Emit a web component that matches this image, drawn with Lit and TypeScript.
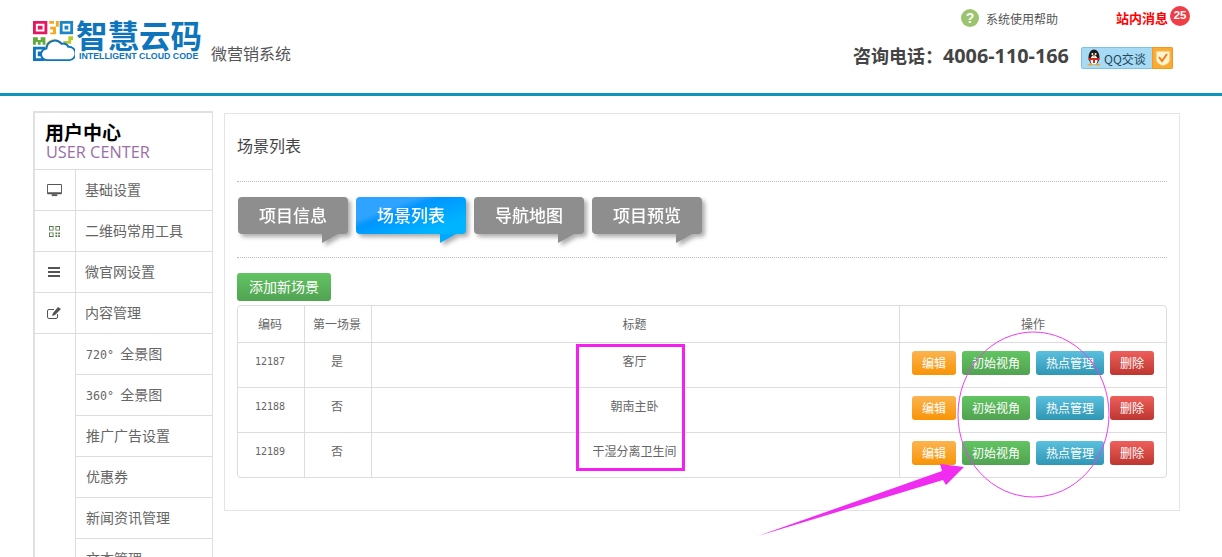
import { LitElement, html, css, svg, unsafeCSS } from "lit";
import { customElement } from "lit/decorators.js";

const CJK = unsafeCSS(`"Noto Sans CJK SC", "Liberation Sans", sans-serif`);

const logoMark = svg`<svg class="mark" width="42" height="42" viewBox="0 0 44 44">
  <path fill="#e6175f" fill-rule="evenodd" d="M0 1h15v14H0zM3 4v8h9V4z"/><rect x="5" y="6" width="5" height="4" fill="#e6175f"/>
  <path fill="#f5a81c" d="M17 1h5v3h-5zM24 1h3v6h-3zM18 7h6v3h-6zM21 10h3v5h-6v-2h3z"/>
  <path fill="#1d86c9" fill-rule="evenodd" d="M28 1h14v14H28zM31 4v8h8V4z"/><rect x="33" y="6" width="4" height="4" fill="#1d86c9"/>
  <path fill="#5cab3c" d="M0 18h5v3h3v-3h5v8h-3v-3H8v3H5v-3H3v3H0z"/>
  <path fill="#b7c92f" d="M37 17h5v4h-2v4h-8v-3h5z"/>
  <path fill="#0e75bd" fill-rule="evenodd" d="M0 28h13v3H3v9h9v3H0z"/><rect x="5" y="33" width="4" height="5" fill="#0e75bd"/>
  <path d="M14 30a8 8 0 0 1 14-6" fill="none" stroke="#f5a81c" stroke-width="2"/>
  <path d="M20 42h-5a6 6 0 0 1 -1-12 9 9 0 0 1 16-5 6 6 0 0 1 7 3 7 7 0 0 1 1 14z" fill="none" stroke="#0e75bd" stroke-width="2"/>
</svg>`;

const penguin = svg`<svg width="16" height="18" viewBox="0 0 16 18">
  <ellipse cx="8" cy="8" rx="5.500" ry="7.500" fill="#1c1c1c"/><ellipse cx="8" cy="11" rx="3.600" ry="4.600" fill="#fff"/>
  <circle cx="6.400" cy="5" r="1" fill="#fff"/><circle cx="9.600" cy="5" r="1" fill="#fff"/>
  <path d="M6 6.600h4l-2 1.400z" fill="#f2a51f"/><path d="M2.500 9h11v2H9v3H7v-3H2.500z" fill="#d9261c"/>
  <path d="M1 16l4-2 2 2.500H2zM15 16l-4-2-2 2.500h5z" fill="#f2a51f"/>
</svg>`;

const shield = svg`<svg width="16" height="18" viewBox="0 0 16 18">
  <path d="M1 2h14v9c0 3-4 5-7 6-3-1-7-3-7-6z" fill="#fff3d0" stroke="#f7b24a"/>
  <path d="M4 8l3 4 5-7" fill="none" stroke="#ef7f1a" stroke-width="2"/>
</svg>`;

const icons: Record<string, unknown> = {
  monitor: svg`<svg width="15" height="13" viewBox="0 0 16 14"><path fill="#555" fill-rule="evenodd" d="M1 0h14a1 1 0 0 1 1 1v9a1 1 0 0 1-1 1H1a1 1 0 0 1-1-1V1a1 1 0 0 1 1-1zM1 1v8h14V1z"/><path fill="#555" d="M5 11h6v2H5z"/></svg>`,
  qr: svg`<svg width="11" height="11" viewBox="0 0 12 12"><path fill="#5b7a4a" fill-rule="evenodd" d="M0 0h5v5H0zM1 1v3h3V1zM7 0h5v5H7zM8 1v3h3V1zM0 7h5v5H0zM1 8v3h3V8zM7 7h2v2H7zM10 7h2v2h-2zM7 10h2v2H7zM10 10h2v2h-2z"/></svg>`,
  menu: svg`<svg width="12" height="10" viewBox="0 0 12 10"><path fill="#555" d="M0 0h12v2H0zM0 4h12v2H0zM0 8h12v2H0z"/></svg>`,
  edit: svg`<svg width="14" height="12" viewBox="0 0 14 12"><path fill="none" stroke="#555" d="M10.500 7v3a1.500 1.500 0 0 1-1.500 1.500H2A1.500 1.500 0 0 1 .5 10V4A1.500 1.500 0 0 1 2 2.500h5"/><path fill="#555" d="M11 0l3 2-6 6-3 1 1-3z"/></svg>`,
};

const topMenu = [
  ["monitor", "基础设置"],
  ["qr", "二维码常用工具"],
  ["menu", "微官网设置"],
  ["edit", "内容管理"],
];
const subMenu = ["720° 全景图", "360° 全景图", "推广广告设置", "优惠券", "新闻资讯管理", "文本管理"];
const tabs = ["项目信息", "场景列表", "导航地图", "项目预览"];
const rows = [
  ["12187", "是", "客厅"],
  ["12188", "否", "朝南主卧"],
  ["12189", "否", "干湿分离卫生间"],
];

@customElement("app-root")
export class AppRoot extends LitElement {
  static styles = css`
    :host {
      display: block;
      position: relative;
      height: 557px;
      overflow: hidden;
      background: #fff;
      font-family: ${CJK};
      font-size: 12px;
      color: #666;
    }
    .top {
      height: 93px;
      border-bottom: 3px solid #0e93bc;
      display: flex;
      justify-content: space-between;
      box-sizing: content-box;
    }
    .brand { display: flex; align-items: flex-start; padding: 19px 0 0 33px; }
    .mark { display: block; flex: none; margin-top: 1px; }
    .wordmark { margin-left: 1px; width: 128px; }
    .cn-name { font-size: 31.5px; line-height: 31px; font-weight: 700; color: #0e75bd; white-space: nowrap; }
    .en-name { font-family: "Liberation Sans", sans-serif; font-size: 8.8px; line-height: 11px; font-weight: 700; color: #0e75bd; white-space: nowrap; margin: 1px 0 0 3px; }
    .product { font-size: 16px; line-height: 22px; color: #555; margin: 23px 0 0 7px; white-space: nowrap; }
    .contact { width: 261px; }
    .links { display: flex; align-items: flex-start; height: 41px; padding-top: 6px; box-sizing: border-box; margin-bottom: 1px; }
    .help { display: flex; align-items: center; height: 24px; gap: 7px; color: #555; white-space: nowrap; }
    .help-icon { width: 18px; height: 18px; border-radius: 50%; background: #9bc46f; color: #fff; font: 700 14px/18px "Liberation Sans", sans-serif; text-align: center; flex: none; }
    .msg { display: flex; align-items: flex-start; margin-left: 58px; color: #f00; font-weight: 700; font-size: 13px; line-height: 24px; white-space: nowrap; }
    .badge { width: 20px; height: 20px; margin-left: 2px; border-radius: 50%; background: #f03d46; color: #fff; font: 700 11.500px/19px "Liberation Sans", sans-serif; text-align: center; }
    .phone-row { display: flex; align-items: flex-start; margin-left: -108px; }
    .phone { font-size: 18px; line-height: 26px; font-weight: 700; color: #444; white-space: nowrap; width: 228px; }
    .phone span { font-family: "Open Sans", sans-serif; font-size: 19.800px; }
    .qq { display: flex; width: 92px; height: 22px; margin-top: 5px; border-radius: 2px; overflow: hidden; flex: none; }
    .qq-l { flex: 1; display: flex; align-items: center; gap: 2px; padding-left: 4px; background: #a7dbf5; border: 1px solid #7fc0e6; border-right: 0; border-radius: 2px 0 0 2px; font-size: 12px; color: #23465c; white-space: nowrap; }
    .qq-r { width: 21px; flex: none; display: flex; align-items: center; justify-content: center; background: #f9ab33; border: 1px solid #ef9a1e; box-sizing: border-box; }

    .body { display: flex; align-items: flex-start; gap: 11px; padding: 15px 0 0 33px; }
    .side { width: 180px; flex: none; border: solid #e0e0e0; border-width: 2px 1px 0 2px; box-sizing: border-box; }
    .side-head { height: 48px; border-bottom: 1px solid #ddd; padding: 8px 0 0 10px; box-sizing: content-box; }
    .side-cn { font-size: 19px; line-height: 22px; font-weight: 700; color: #000; }
    .side-en { font-family: "Open Sans", sans-serif; font-size: 16.300px; line-height: 18px; color: #9a6fa8; white-space: nowrap; padding-left: 1px; }
    .row { display: grid; grid-template-columns: 40px 1fr; grid-template-rows: 41px; height: 41px; font-size: 14px; }
    .ico { display: flex; align-items: center; justify-content: center; border-bottom: 1px solid #ddd; padding-right: 2px; box-sizing: border-box; }
    .sub .ico { border-bottom: 0; }
    .lbl { border-left: 1px solid #ddd; border-bottom: 1px solid #ddd; padding-left: 9px; line-height: 39px; white-space: nowrap; color: #666; overflow: hidden; }
    .sub .lbl { padding-left: 10px; }
    .deg { display: inline-block; width: 31px; font-family: "DejaVu Sans Mono", monospace; font-size: 11.600px; line-height: 1; }

    .panel { width: 956px; height: 398px; flex: none; margin-top: 2px; border: 1px solid #e4e4e4; box-sizing: border-box; padding: 0 12px; }
    .title { font-size: 16px; line-height: 24px; color: #444; padding-top: 19px; height: 68px; box-sizing: border-box; border-bottom: 1px dotted #bbb; }
    .tabs { display: flex; gap: 8px; padding: 15px 0 14px 1px; height: 76px; box-sizing: border-box; border-bottom: 1px dotted #bbb; }
    .tab { position: relative; width: 110px; height: 37px; border-radius: 4px; background: #8e8e8e; color: #fff; text-align: center; font-size: 17px; font-weight: 500; line-height: 35px; filter: drop-shadow(3px 3px 2px rgba(0,0,0,.32)); }
    .tab::after { content: ""; position: absolute; left: 84px; top: 37px; width: 16px; height: 9px; background: #8e8e8e; clip-path: polygon(0 0, 100% 0, 0 100%); }
    .tab.on { background: linear-gradient(160deg, #2ea3ff 0%, #2ea3ff 30%, #0096ff 40%, #00b4ff 80%); }
    .tab.on::after { background: #00a8ff; }
    .add { margin: 15px 0 4px; width: 94px; height: 28px; border-radius: 3px; color: #fff; font-size: 14px; line-height: 27px; text-align: center; background: linear-gradient(#62c462, #51a351); }
    .table { width: 930px; border: 1px solid #ddd; border-radius: 4px; border-spacing: 0; border-collapse: separate; table-layout: fixed; box-sizing: border-box; }
    .table th, .table td { border-right: 1px solid #ddd; border-bottom: 1px solid #ddd; padding: 0 2px 0 0; text-align: center; font-weight: 400; color: #666; font-size: 12px; vertical-align: top; }
    .table th { height: 36px; line-height: 36px; }
    .table td { height: 44px; line-height: 36px; }
    .table th:last-child, .table td:last-child { border-right: 0; padding: 0; }
    .table tr:last-child td { border-bottom: 0; }
    .table td.code { font-family: "DejaVu Sans Mono", monospace; font-size: 10px; line-height: 37px; }
    .ops { display: flex; justify-content: flex-end; gap: 6px; padding: 8px 12px 0 0; }
    .btn { height: 24px; line-height: 23px; border-radius: 3px; color: #fff; font-size: 12px; text-align: center; width: 68px; }
    .btn.s { width: 44px; }
    .orange { background: linear-gradient(#fbb450, #f89406); }
    .green { background: linear-gradient(#62c462, #51a351); }
    .blue { background: linear-gradient(#5bc0de, #2f96b4); }
    .red { background: linear-gradient(#ee5f5b, #bd362f); }
    .marks { position: absolute; left: 0; top: 0; pointer-events: none; }
  `;

  render() {
    return html`
      <div class="top">
        <div class="brand">
          ${logoMark}
          <div class="wordmark">
            <div class="cn-name">智慧云码</div>
            <div class="en-name">INTELLIGENT CLOUD CODE</div>
          </div>
          <div class="product">微营销系统</div>
        </div>
        <div class="contact">
          <div class="links">
            <div class="help"><span class="help-icon">?</span>系统使用帮助</div>
            <div class="msg">站内消息<span class="badge">25</span></div>
          </div>
          <div class="phone-row">
            <div class="phone">咨询电话：<span>4006-110-166</span></div>
            <div class="qq">
              <div class="qq-l">${penguin}QQ交谈</div>
              <div class="qq-r">${shield}</div>
            </div>
          </div>
        </div>
      </div>
      <div class="body">
        <nav class="side">
          <div class="side-head">
            <div class="side-cn">用户中心</div>
            <div class="side-en">USER CENTER</div>
          </div>
          ${topMenu.map(
            ([ic, t]) => html`<div class="row"><div class="ico">${icons[ic]}</div><div class="lbl">${t}</div></div>`
          )}
          ${subMenu.map((t) => {
            const m = t.match(/^(\d+°) (.*)$/);
            return html`<div class="row sub"><div class="ico"></div><div class="lbl">${m
              ? html`<span class="deg">${m[1]}</span> ${m[2]}`
              : t}</div></div>`;
          })}
        </nav>
        <main class="panel">
          <div class="title">场景列表</div>
          <div class="tabs">
            ${tabs.map((t, i) => html`<div class="tab ${i === 1 ? "on" : ""}">${t}</div>`)}
          </div>
          <div class="add">添加新场景</div>
          <table class="table">
            <colgroup><col style="width:67px" /><col style="width:67px" /><col style="width:528px" /><col /></colgroup>
            <thead><tr><th>编码</th><th>第一场景</th><th>标题</th><th>操作</th></tr></thead>
            <tbody>
              ${rows.map(
                ([c, f, t]) => html`<tr>
                  <td class="code">${c}</td><td>${f}</td><td>${t}</td>
                  <td><div class="ops">
                    <div class="btn s orange">编辑</div>
                    <div class="btn green">初始视角</div>
                    <div class="btn blue">热点管理</div>
                    <div class="btn s red">删除</div>
                  </div></td>
                </tr>`
              )}
            </tbody>
          </table>
        </main>
      </div>
      <svg class="marks" width="1222" height="557" viewBox="0 0 1222 557">
        <rect x="577.500" y="345.500" width="106" height="124" fill="none" stroke="#f71ff0" stroke-width="3"/>
        <ellipse cx="1033.500" cy="414.500" rx="75.500" ry="82.500" fill="none" stroke="#ee3cee" stroke-width="1"/>
        <path d="M758 536L942 471L940 464L964 467L946 485L943 480Z" fill="#f02cf0"/>
      </svg>
    `;
  }
}
